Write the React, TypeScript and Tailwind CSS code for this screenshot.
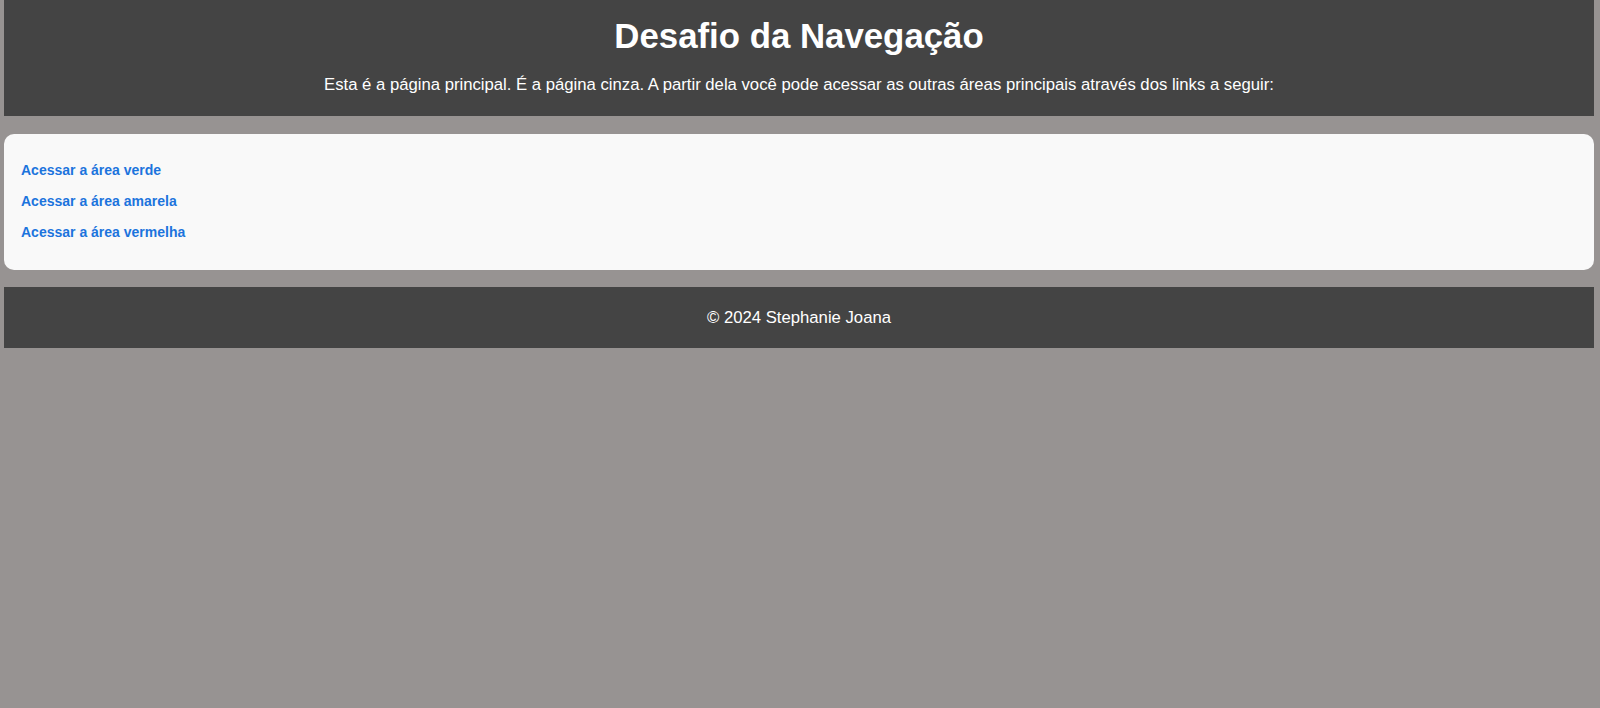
export default function App() {
    const links = [
        "Acessar a área verde",
        "Acessar a área amarela",
        "Acessar a área vermelha",
    ];

    return (
        <div
            className="min-h-[708px] bg-[#979392] pl-[4px] pr-[6px] text-white"
            style={{ fontFamily: '"Liberation Sans", Arial, sans-serif' }}
        >
            <header className="flex h-[116px] flex-col items-center bg-[#444444] pt-[16px]">
                <h1 className="text-[34.8px] font-bold leading-[40px]">
                    Desafio da Navegação
                </h1>
                <p className="mt-[19px] text-[16.7px] leading-[20px]">
                    Esta é a página principal. É a página cinza. A partir dela
                    você pode acessar as outras áreas principais através dos
                    links a seguir:
                </p>
            </header>

            <main className="mt-[17.5px] flex h-[136px] flex-col gap-[13px] rounded-[10px] bg-[#f9f9f9] px-[17px] pt-[27px]">
                {links.map((link) => (
                    <a
                        key={link}
                        href="#"
                        className="text-[14px] font-bold leading-[18px] text-[#1c74dd]"
                    >
                        {link}
                    </a>
                ))}
            </main>

            <footer className="mt-[17.5px] flex h-[61px] items-center justify-center bg-[#444444]">
                <p className="text-[16.7px]">© 2024 Stephanie Joana</p>
            </footer>
        </div>
    );
}
